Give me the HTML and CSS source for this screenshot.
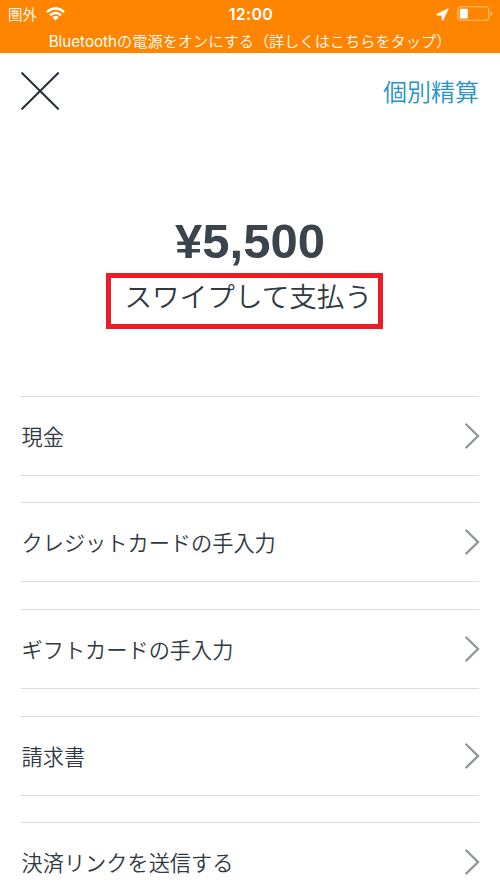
FILE: index.html
```html
<!DOCTYPE html>
<html lang="ja">
<head>
<meta charset="utf-8">
<title>お支払い</title>
<link rel="stylesheet" href="styles.css">
</head>
<body>
<header class="status">
  <div class="status-bar">
    <div class="status-left">
      <span class="carrier">圏外</span>
      <svg class="wifi" width="19" height="14" viewBox="0 0 19 14" fill="none" stroke="#fff" stroke-width="2.6"><path d="M1 5.1C5.8.3 13.200.3 18 5.100M4 8.300c3.200-3.100 7.800-3.100 11 0"/><path d="M9.500 13.500L6.300 10.300c1.800-1.700 4.600-1.700 6.400 0z" fill="#fff" stroke="none"/></svg>
    </div>
    <span class="clock">12:00</span>
    <div class="status-right">
      <svg width="13" height="13" viewBox="0 0 13 13"><path d="M12.500.5L.5 6.200 1 7.200 5.800 7.200 6 12 7 12.300z" fill="#fff" stroke="#fff" stroke-width=".6" stroke-linejoin="round"/></svg>
      <svg width="36" height="16" viewBox="0 0 36 16"><rect x=".8" y=".8" width="31" height="13.500" rx="3" fill="none" stroke="#ffc182" stroke-width="1.100"/><rect x="2.800" y="2.800" width="8" height="9.700" rx=".8" fill="#fff"/><path d="M33.600 5.200c2 .8 2 4 0 4.800z" fill="#ffc182"/></svg>
    </div>
  </div>
  <p class="notice"><span class="latin">Bluetooth</span>の電源をオンにする（詳しくはこちらをタップ）</p>
</header>
<nav class="toolbar">
  <svg width="38" height="38" viewBox="0 0 38 38" stroke="#2b343d" stroke-width="2.200" stroke-linecap="round"><path d="M1.200 1.200l35.800 35.600M37 1.200L1.200 36.800"/></svg>
  <a class="split">個別精算</a>
</nav>
<main>
  <section class="summary">
    <h1 class="amount">¥5,500</h1>
    <div class="swipe">スワイプして支払う</div>
  </section>
  <ul class="methods">
    <li class="method"><span>現金</span><svg class="chevron" viewBox="0 0 15 26"><path d="M1.300 1.500L13 13 1.300 24.500"/></svg></li>
    <li class="method"><span>クレジットカードの手入力</span><svg class="chevron" viewBox="0 0 15 26"><path d="M1.300 1.500L13 13 1.300 24.500"/></svg></li>
    <li class="method"><span>ギフトカードの手入力</span><svg class="chevron" viewBox="0 0 15 26"><path d="M1.300 1.500L13 13 1.300 24.500"/></svg></li>
    <li class="method"><span>請求書</span><svg class="chevron" viewBox="0 0 15 26"><path d="M1.300 1.500L13 13 1.300 24.500"/></svg></li>
    <li class="method"><span>決済リンクを送信する</span><svg class="chevron" viewBox="0 0 15 26"><path d="M1.300 1.500L13 13 1.300 24.500"/></svg></li>
  </ul>
</main>
</body>
</html>
```
FILE: styles.css
```css
* { box-sizing: border-box; margin: 0; padding: 0; }
html, body { height: 889px; overflow: hidden; }
body {
  background: #fff;
  color: #2f3942;
  font-family: "Noto Sans CJK JP", sans-serif;
  font-weight: 350;
}
svg { display: block; flex: none; }
.status { height: 53px; background: #ff8400; color: #fff; }
.status-bar {
  display: grid;
  grid-template-columns: 1fr auto 1fr;
  align-items: center;
  height: 28px;
  padding: 0 7px 0 8px;
}
.status-left, .status-right { display: flex; align-items: center; }
.status-left { gap: 9px; }
.carrier { font-size: 14.5px; line-height: 26px; }
.wifi { margin-top: -1px; }
.clock { padding-left: 1px; font: 600 16px/28px Inter, sans-serif; letter-spacing: .3px; }
.status-right { justify-content: flex-end; gap: 8px; }
.notice { font-size: 15.2px; line-height: 24px; text-align: center; white-space: nowrap; }
.latin { font-family: Inter, sans-serif; font-weight: 400; }
.toolbar {
  display: flex;
  align-items: center;
  justify-content: space-between;
  height: 76px;
  padding: 0 21px;
}
.split { padding-bottom: 2px; color: #2492cb; font-size: 24px; }
.summary {
  display: flex;
  flex-direction: column;
  align-items: center;
  height: 266.67px;
  padding: 82px 12px 0 0;
}
.amount {
  margin-left: 12px;
  color: #3b444d;
  font: 700 49px/60px "Liberation Sans", sans-serif;
}
.swipe {
  width: 277px;
  height: 56px;
  margin-top: 2px;
  padding-left: 14px;
  border: 5px solid #ee1c25;
  font-size: 27.6px;
  line-height: 34px;
  white-space: nowrap;
}
.methods { padding: 0 21px; list-style: none; }
.method {
  display: flex;
  align-items: center;
  justify-content: space-between;
  height: 80px;
  margin-bottom: 26.67px;
  border: solid #d9dcdf;
  border-width: 1px 0;
  font-size: 21.2px;
}
.method span { padding: 0 0 1px .5px; }
.chevron {
  width: 15px;
  height: 26px;
  margin-right: -1px;
  fill: none;
  stroke: #92979c;
  stroke-width: 2.4;
  stroke-linecap: round;
}
```
